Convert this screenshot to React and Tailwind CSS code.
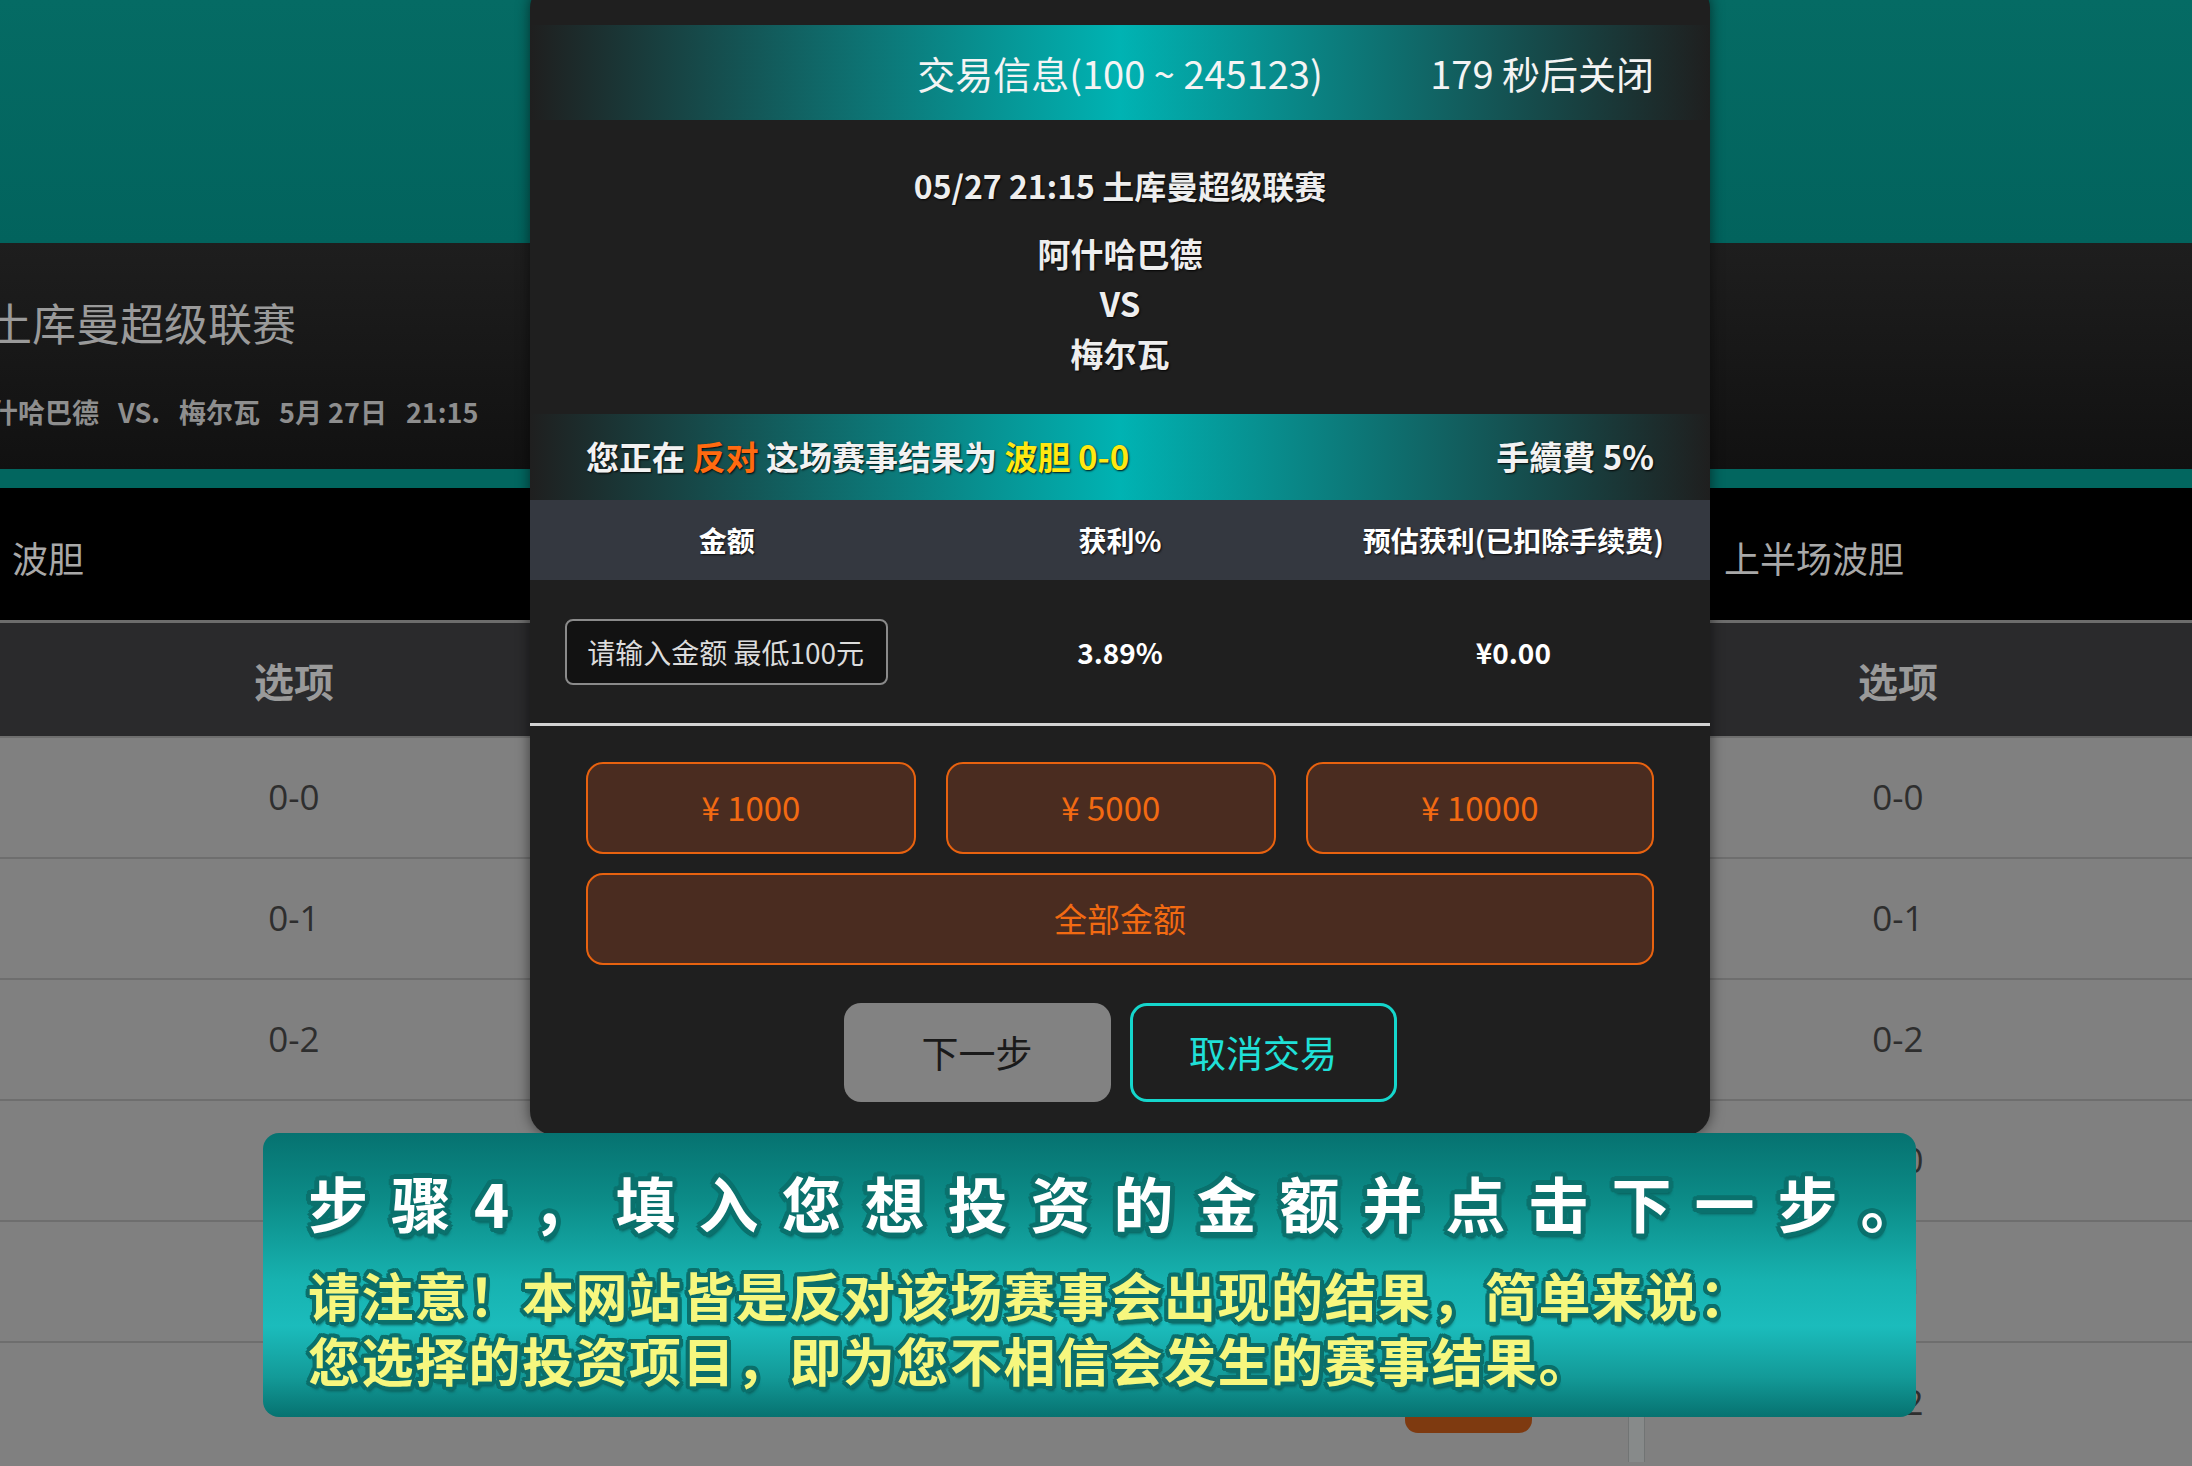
export default function App() {
  const rows = [
    { r: '0-0', left: true },
    { r: '0-1', left: true },
    { r: '0-2', left: true },
    { r: '1-0', left: false },
    { r: '1-1', left: false },
    { r: '1-2', left: false },
  ];
  return (
    <div className="relative w-[2192px] h-[1466px] overflow-hidden bg-[#808080] font-['Noto_Sans_CJK_SC','Noto_Sans',sans-serif]">
      {/* ---------- background page ---------- */}
      <div className="h-[243px] bg-[linear-gradient(180deg,#056b64_0%,#02635d_100%)]" />
      <div className="h-[226px] pt-[49px] bg-[linear-gradient(180deg,#1e1e1e_0%,#111111_100%)]">
        <div className="ml-[-12px] whitespace-nowrap text-[44px] leading-[60px] text-[#9a9a9a]">土库曼超级联赛</div>
        <div className="ml-[-36px] mt-[40px] flex gap-[19px] whitespace-nowrap text-[27px] font-bold leading-[40px] text-[#8e8e8e]">
          <span>阿什哈巴德</span>
          <span>VS.</span>
          <span>梅尔瓦</span>
          <span>5月 27日</span>
          <span>21:15</span>
        </div>
      </div>
      <div className="h-[19px] bg-[#02665f]" />
      <div className="grid h-[132px] grid-cols-[1645px_1fr] items-center bg-black pt-[6px] text-[36px] text-[#a8a8a8]">
        <div className="pl-[12px]">波胆</div>
        <div className="pl-[79px]">上半场波胆</div>
      </div>
      <div className="h-[3px] bg-[#6c6c6c]" />
      <div className="grid h-[113px] grid-cols-[588px_720px_320px_17px_506px_1fr] items-center bg-[#2a2a2c] text-[40px] font-bold text-[#9a9a9a]">
        <div className="text-center">选项</div>
        <div />
        <div />
        <div />
        <div className="text-center">选项</div>
        <div />
      </div>
      {rows.map(({ r, left }) => (
        <div
          key={r}
          className="grid h-[121px] grid-cols-[588px_720px_320px_17px_506px_1fr] items-center border-t-2 border-[#6e6e6e] bg-[#808080] font-['Open_Sans',sans-serif] text-[35px] text-[#2e2e2e]"
        >
          <div className="text-center">{left ? r : ''}</div>
          <div />
          <div className="flex justify-center">
            <div className="h-[60px] w-[127px] rounded-[13px] bg-[#7e3a10]" />
          </div>
          <div className="h-full border-x border-[#717474] bg-[#878a8a]" />
          <div className="text-center">{r}</div>
          <div />
        </div>
      ))}

      {/* ---------- modal ---------- */}
      <div className="absolute left-[530px] top-[-16px] flex w-[1180px] flex-col rounded-[24px] bg-[#1f1f1f] pt-[41px] pb-[33px] text-white shadow-[0_0_14px_rgba(0,0,0,0.55)]">
        <div className="grid h-[95px] grid-cols-[1fr_auto_1fr] items-center bg-[linear-gradient(90deg,#1f1f1f_0%,#00b3b3_50%,#1f1f1f_100%)] text-[38px] text-[#f4f4f4]">
          <div />
          <div className="whitespace-nowrap">交易信息(100 ~ 245123)</div>
          <div className="justify-self-end whitespace-nowrap pr-[56px]">179 秒后关闭</div>
        </div>

        <div className="pt-[40px] pb-[36px] text-center text-[33px] font-bold text-[#eeeeee] [text-shadow:1px_1px_2px_rgba(0,0,0,0.9)]">
          <div className="text-[32px] leading-[50px]">05/27 21:15 土库曼超级联赛</div>
          <div className="mt-[18px] leading-[50px]">阿什哈巴德</div>
          <div className="leading-[50px]">VS</div>
          <div className="leading-[50px]">梅尔瓦</div>
        </div>

        <div className="flex h-[86px] items-center justify-between bg-[linear-gradient(90deg,#1f1f1f_0%,#00b3b3_50%,#1f1f1f_100%)] px-[56px] text-[33px] font-bold text-[#f2f2f2] [text-shadow:1px_1px_2px_rgba(0,0,0,0.9)]">
          <div className="whitespace-nowrap">
            您正在 <span className="text-[#ff6a10]">反对</span> 这场赛事结果为 <span className="text-[#ffe812]">波胆 0-0</span>
          </div>
          <div className="whitespace-nowrap">手續費 5%</div>
        </div>

        <div className="grid h-[80px] grid-cols-3 items-center bg-[#343840] text-center text-[28px] font-bold text-white [text-shadow:1px_1px_2px_rgba(0,0,0,0.8)]">
          <div>金额</div>
          <div>获利%</div>
          <div>预估获利(已扣除手续费)</div>
        </div>

        <div className="grid h-[143px] grid-cols-3 items-center text-center text-[28px] font-bold text-white">
          <div className="flex justify-center">
            <div className="flex h-[66px] w-[323px] items-center rounded-[8px] border-2 border-[#8a8a8a] bg-[#121212] pl-[20px] text-[28px] font-normal text-[#dcdcdc]">
              请输入金额 最低100元
            </div>
          </div>
          <div>3.89%</div>
          <div>¥0.00</div>
        </div>

        <div className="h-[3px] bg-[#d2d2d2]" />

        <div className="px-[56px] pt-[36px]">
          <div className="flex h-[92px] gap-[30px] text-[33px] text-[#f26a12]">
            <div className="flex flex-auto items-center justify-center rounded-[17px] border-2 border-[#e8620f] bg-[#4a2c20]">¥ 1000</div>
            <div className="flex flex-auto items-center justify-center rounded-[17px] border-2 border-[#e8620f] bg-[#4a2c20]">¥ 5000</div>
            <div className="flex flex-auto items-center justify-center rounded-[17px] border-2 border-[#e8620f] bg-[#4a2c20]">¥ 10000</div>
          </div>
          <div className="mt-[19px] flex h-[92px] items-center justify-center rounded-[17px] border-2 border-[#e8620f] bg-[#4a2c20] text-[33px] text-[#f26a12]">
            全部金额
          </div>
          <div className="mt-[38px] flex justify-center gap-[19px] text-[37px]">
            <div className="flex h-[99px] w-[267px] items-center justify-center rounded-[17px] bg-[#828282] text-[#1a1a1a]">下一步</div>
            <div className="flex h-[99px] w-[267px] items-center justify-center rounded-[17px] border-[3px] border-[#15d6cc] text-[#1fe0d8]">取消交易</div>
          </div>
        </div>
      </div>

      {/* ---------- step banner ---------- */}
      <div className="absolute left-[263px] top-[1133px] h-[284px] w-[1653px] rounded-[16px] bg-[linear-gradient(180deg,#067270_0%,#0c8c88_24%,#17b2b0_52%,#1bbcbc_68%,#139a98_86%,#067270_100%)] pl-[45px] pt-[34px] font-bold">
        <div className="whitespace-nowrap text-[60px] leading-[70px] tracking-[23px] text-white [text-shadow:5px_0_0_#0a716d,-5px_0_0_#0a716d,0_5px_0_#0a716d,0_-5px_0_#0a716d,4px_3px_0_#0a716d,-4px_3px_0_#0a716d,4px_-3px_0_#0a716d,-4px_-3px_0_#0a716d,3px_4px_0_#0a716d,-3px_4px_0_#0a716d,3px_-4px_0_#0a716d,-3px_-4px_0_#0a716d,2px_6px_3px_#0a5b58]">
          步骤4，填入您想投资的金额并点击下一步。
        </div>
        <div className="mt-[25px] whitespace-nowrap text-[52px] leading-[65px] tracking-[1.5px] text-[#f6f77e] [text-shadow:4px_0_0_#0b6f6b,-4px_0_0_#0b6f6b,0_4px_0_#0b6f6b,0_-4px_0_#0b6f6b,3px_3px_0_#0b6f6b,-3px_3px_0_#0b6f6b,3px_-3px_0_#0b6f6b,-3px_-3px_0_#0b6f6b,4px_2px_0_#0b6f6b,-4px_2px_0_#0b6f6b,2px_-4px_0_#0b6f6b,-2px_-4px_0_#0b6f6b,2px_5px_3px_#0a5b58]">
          请注意！本网站皆是反对该场赛事会出现的结果，简单来说：
        </div>
        <div className="whitespace-nowrap text-[52px] leading-[65px] tracking-[1.5px] text-[#f6f77e] [text-shadow:4px_0_0_#0b6f6b,-4px_0_0_#0b6f6b,0_4px_0_#0b6f6b,0_-4px_0_#0b6f6b,3px_3px_0_#0b6f6b,-3px_3px_0_#0b6f6b,3px_-3px_0_#0b6f6b,-3px_-3px_0_#0b6f6b,4px_2px_0_#0b6f6b,-4px_2px_0_#0b6f6b,2px_-4px_0_#0b6f6b,-2px_-4px_0_#0b6f6b,2px_5px_3px_#0a5b58]">
          您选择的投资项目，即为您不相信会发生的赛事结果。
        </div>
      </div>
    </div>
  );
}
